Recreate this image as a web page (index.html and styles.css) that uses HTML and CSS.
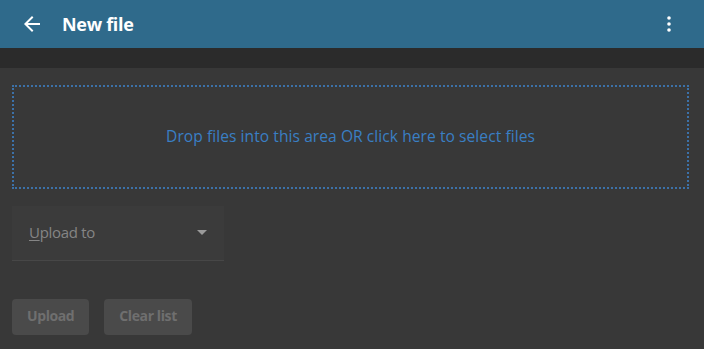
FILE: index.html
```html
<!DOCTYPE html>
<html>
<head>
<meta charset="utf-8">
<link rel="stylesheet" href="styles.css">
</head>
<body>
<header class="appbar">
  <button class="icon-btn back" aria-label="Back">
    <svg width="24" height="24" viewBox="0 0 24 24"><path d="M20 11H7.83l5.59-5.59L12 4l-8 8 8 8 1.41-1.41L7.83 13H20v-2z" fill="#fff"/></svg>
  </button>
  <h1 class="title">New file</h1>
  <div class="spacer"></div>
  <button class="icon-btn more" aria-label="More">
    <svg width="24" height="24" viewBox="0 0 24 24"><circle cx="12" cy="6" r="1.8" fill="#fff"/><circle cx="12" cy="12" r="1.8" fill="#fff"/><circle cx="12" cy="18" r="1.8" fill="#fff"/></svg>
  </button>
</header>
<div class="strip"></div>
<main class="content">
  <div class="dropzone">Drop files into this area OR click here to select files</div>
  <div class="select">
    <span class="select-label"><u>U</u>pload to</span>
    <span class="caret"></span>
  </div>
  <div class="actions">
    <button class="btn">Upload</button>
    <button class="btn">Clear list</button>
  </div>
</main>
</body>
</html>
```
FILE: styles.css
```css
* { box-sizing: border-box; }
html, body { margin: 0; height: 100%; }
body {
  background: #383838;
  font-family: "Open Sans", "Noto Sans", sans-serif;
  overflow: hidden;
}
.appbar {
  height: 48px;
  background: #2f6a8b;
  display: flex;
  align-items: center;
  padding: 0 23px 0 20px;
}
.icon-btn {
  background: none;
  border: 0;
  padding: 0;
  width: 24px;
  height: 24px;
  display: flex;
  cursor: pointer;
}
.title {
  margin: 0 0 0 18px;
  color: #fff;
  font-size: 18px;
  font-weight: 700;
  letter-spacing: -0.3px;
}
.spacer { flex: 1; }
.strip {
  height: 20px;
  background: #2b2b2b;
}
.content {
  padding: 17px 15px 0 12px;
  display: flex;
  flex-direction: column;
}
.dropzone {
  height: 104px;
  border: 2px dotted #3c71a8;
  display: flex;
  align-items: center;
  justify-content: center;
  padding-bottom: 2px;
  color: #3a7fc4;
  font-size: 15.6px;
  letter-spacing: 0.05px;
}
.select {
  margin-top: 17px;
  width: 212px;
  height: 55px;
  background: #3b3b3b;
  border-bottom: 1px solid #474747;
  display: flex;
  align-items: center;
  padding: 0 17px 3px 17px;
}
.select-label {
  flex: 1;
  color: #858585;
  font-size: 15px;
  letter-spacing: -0.3px;
}
.select-label u { text-decoration-thickness: 1px; text-underline-offset: 2px; }
.caret {
  width: 0; height: 0;
  margin-top: 2px;
  border-left: 5px solid transparent;
  border-right: 5px solid transparent;
  border-top: 5px solid #9a9a9a;
}
.actions {
  margin-top: 38px;
  display: flex;
  gap: 15px;
}
.btn {
  height: 36px;
  padding: 0 15px 3px;
  border: 0;
  border-radius: 4px;
  background: #4a4a4a;
  color: #6f6f6f;
  font-family: inherit;
  font-size: 14px;
  font-weight: 700;
  letter-spacing: -0.4px;
}
```
